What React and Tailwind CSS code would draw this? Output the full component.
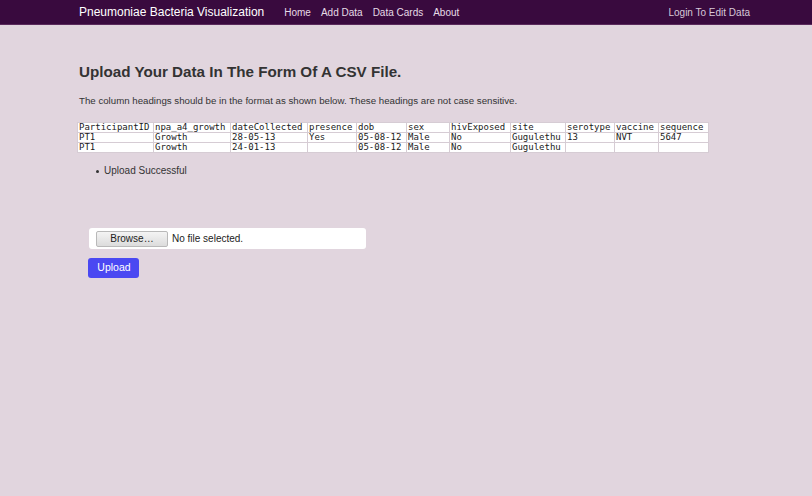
const cols = [
  { key: 'ParticipantID', w: 'w-[76px]' },
  { key: 'npa_a4_growth', w: 'w-[77px]' },
  { key: 'dateCollected', w: 'w-[77px]' },
  { key: 'presence', w: 'w-[49px]' },
  { key: 'dob', w: 'w-[50px]' },
  { key: 'sex', w: 'w-[43px]' },
  { key: 'hivExposed', w: 'w-[61px]' },
  { key: 'site', w: 'w-[55px]' },
  { key: 'serotype', w: 'w-[49px]' },
  { key: 'vaccine', w: 'w-[44px]' },
  { key: 'sequence', w: 'w-[50px]' },
];

const rows = [
  ['PT1', 'Growth', '28-05-13', 'Yes', '05-08-12', 'Male', 'No', 'Gugulethu', '13', 'NVT', '5647'],
  ['PT1', 'Growth', '24-01-13', '', '05-08-12', 'Male', 'No', 'Gugulethu', '', '', ''],
];

const sans = "font-['Liberation_Sans',Arial,sans-serif]";

export default function App() {
  return (
    <div className={`min-h-[496px] bg-[#e1d5de] ${sans}`}>
      {/* navbar */}
      <nav className="h-[25px] bg-[#390a3e] border-b border-[#5a2a5c] flex items-center px-[79px]">
        <span className="text-[12px] text-white">Pneumoniae Bacteria Visualization</span>
        <div className="flex gap-[10px] ml-[20px] text-[10px] text-[#e6dbe6]">
          <span>Home</span>
          <span>Add Data</span>
          <span>Data Cards</span>
          <span>About</span>
        </div>
        <span className="ml-auto mr-[-17px] text-[10px] text-[#d7c8d8]">Login To Edit Data</span>
      </nav>

      <div className="pl-[79px] pt-[38px] text-[#333]">
        <h1 className="text-[15.2px] font-bold leading-[18px]">Upload Your Data In The Form Of A CSV File.</h1>
        <p className="mt-[14px] text-[9.7px] leading-[12px]">
          The column headings should be in the format as shown below. These headings are not case sensitive.
        </p>

        <table className="mt-[15px] ml-[-2px] table-fixed border-collapse font-['DejaVu_Sans_Mono',monospace] text-[9px] leading-[9px] text-[#1a1a1a]">
          <thead>
            <tr>
              {cols.map(c => (
                <th key={c.key} className={`${c.w} bg-white border border-[#d6ccd4] pl-[1px] pr-[2px] py-0 text-left font-normal`}>{c.key}</th>
              ))}
            </tr>
          </thead>
          <tbody>
            {rows.map((r, i) => (
              <tr key={i}>
                {r.map((v, j) => (
                  <td key={j} className="bg-white border border-[#d6ccd4] pl-[1px] pr-[2px] py-0">{v}</td>
                ))}
              </tr>
            ))}
          </tbody>
        </table>

        <div className="mt-[12px] ml-[17px] flex items-center gap-[5px] text-[10px] leading-[12px]">
          <span className="w-[3px] h-[3px] rounded-full bg-[#333]" />
          <span>Upload Successful</span>
        </div>

        <div className="mt-[51px] ml-[10px] w-[277px] h-[21px] bg-white rounded-[3px] flex items-center pl-[7px] gap-[4px]">
          <span className="h-[16px] w-[72px] flex items-center justify-center border border-[#b9b9b9] rounded-[2px] bg-gradient-to-b from-[#f4f4f4] to-[#dcdcdc] text-[10px] text-[#222]">Browse…</span>
          <span className="text-[10px] text-[#222]">No file selected.</span>
        </div>

        <button className="mt-[9px] ml-[9px] w-[51px] h-[20px] rounded-[3px] bg-[#4a48f2] text-white text-[10.5px] pl-[1px]">Upload</button>
      </div>
    </div>
  );
}
